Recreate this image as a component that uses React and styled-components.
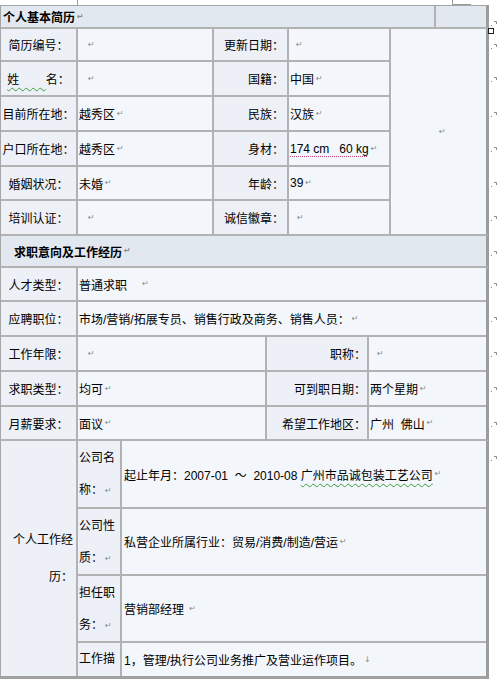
import React from "react";
import styled, { createGlobalStyle } from "styled-components";

const GlobalStyle = createGlobalStyle`
  html, body {
    margin: 0;
    padding: 0;
    background: #ffffff;
  }
  body {
    font-family: "Liberation Sans", "Noto Sans CJK SC", sans-serif;
    font-size: 12px;
    color: #000;
  }
`;

const Page = styled.div`
  width: 497px;
  height: 683px;
  overflow: hidden;
`;

const Stub = styled.div`
  display: flex;
  height: 5px;
`;

const StubBox = styled.div`
  width: ${(p) => p.$w}px;
  margin-left: ${(p) => p.$ml || 0}px;
  border-right: ${(p) => (p.$edge ? "1px solid #9a9a9a" : "0")};
  border-left: ${(p) => (p.$lead ? "1px solid #9a9a9a" : "0")};
  border-bottom: ${(p) => (p.$base ? "1px solid #9a9a9a" : "0")};
`;

const Band = styled.div`
  position: relative;
  display: flex;
  align-items: flex-start;
`;

const Table = styled.div`
  display: grid;
  grid-template-columns: ${(p) => p.$cols};
  grid-template-rows: ${(p) => p.$rows};
  gap: 2px;
  width: 485px;
  background: #b2b2b2;
  border-left: 1px solid #a6a6a6;
  border-right: 3px solid #9c9c9c;
  border-top: ${(p) => (p.$top ? "1px solid #a6a6a6" : "0")};
  border-bottom: ${(p) => (p.$last ? "3px solid #a0a0a0" : "2px solid #b2b2b2")};
`;

const MarkCol = styled.div`
  display: grid;
  grid-template-rows: ${(p) => p.$rows};
  gap: 2px;
  width: 8px;
  padding-top: ${(p) => (p.$top ? 1 : 0)}px;
`;

const MarkSlot = styled.div`
  padding: 9px 0 0 2px;
`;

const Handle = styled.div`
  position: absolute;
  top: -1px;
  left: 488px;
  width: 4px;
  height: 4px;
  border: 1px solid #222;
  background: #fff;
`;

const Cell = styled.div`
  display: flex;
  align-items: center;
  justify-content: ${(p) =>
    p.$align === "right" ? "flex-end" : p.$align === "center" ? "center" : "flex-start"};
  padding: 0 ${(p) => p.$pr ?? 2}px 0 ${(p) => p.$pl ?? 2}px;
  background: ${(p) => (p.$label ? "#edf1f7" : "#f3f6fa")};
  white-space: pre;
  overflow: hidden;
  min-width: 0;
`;

const HeadCell = styled.div`
  display: flex;
  align-items: center;
  padding-left: ${(p) => p.$pl ?? 2}px;
  background: #e2e8f0;
  font-weight: 700;
  white-space: pre;
`;

const PhotoCell = styled(Cell)`
  grid-column: 5;
  grid-row: 1 / span 6;
  padding-left: 46px;
  justify-content: flex-start;
`;

const WrapCell = styled.div`
  grid-row: ${(p) => p.$span || "auto"};
  display: flex;
  flex-direction: column;
  justify-content: ${(p) => (p.$top ? "flex-start" : "center")};
  align-items: ${(p) => (p.$right ? "flex-end" : "flex-start")};
  padding: 0 ${(p) => p.$pr ?? 1}px 0 ${(p) => p.$pl ?? 1}px;
  background: #edf1f7;
  overflow: hidden;
`;

const Line = styled.div`
  line-height: ${(p) => p.$lh}px;
  white-space: nowrap;
`;

const Para = styled.span`
  font-family: "DejaVu Sans", sans-serif;
  font-size: 8px;
  line-height: 1;
  color: #8a8a8a;
  margin-left: 2px;
  vertical-align: 1px;
`;

const Squiggle = styled.span`
  text-decoration: underline wavy #3c9a3c;
  text-decoration-thickness: 1px;
  text-underline-offset: 3px;
`;

const Dotted = styled.span`
  text-decoration: underline dotted #c8407a;
  text-decoration-thickness: 1px;
  text-underline-offset: 3px;
`;

const P = () => <Para>↵</Para>;

const RowMark = () => (
  <svg width="6" height="5" viewBox="0 0 6 5">
    <rect x="0" y="4" width="1" height="1" fill="#8a8a8a" />
    <path d="M3 0.5 H5.5 V3" stroke="#8a8a8a" strokeWidth="1" fill="none" />
  </svg>
);

const Marks = ({ rows, count, top }) => (
  <MarkCol $rows={rows} $top={top}>
    {Array.from({ length: count }).map((_, i) => (
      <MarkSlot key={`mark-${i}`}>
        <RowMark />
      </MarkSlot>
    ))}
  </MarkCol>
);

const SubLabel = ({ first, second, top }) => (
  <WrapCell $top={top}>
    <Line $lh={32}>{first}</Line>
    {second && (
      <Line $lh={32}>
        {second}
        <P />
      </Line>
    )}
  </WrapCell>
);

const infoRows = "31px 33px 33px 33px 32px 33px";
const jobRows = "32px 33px 33px 33px 32px";
const workRows = "66px 65px 65px 33px";

export default function App() {
  return (
    <Page>
      <GlobalStyle />
      <Stub>
        <StubBox $w={77} $edge />
        <StubBox $w={18} $ml={374} $lead $base />
      </Stub>

      <Band>
        <Table $cols="433px 50px" $rows="21px" $top>
          <HeadCell>
            个人基本简历
            <P />
          </HeadCell>
          <HeadCell />
        </Table>
        <Marks rows="21px" count={1} top />
      </Band>

      <Band>
        <Handle />
        <Table $cols="75px 134px 73px 100px 95px" $rows={infoRows}>
          <Cell $label $align="center">简历编号：</Cell>
          <Cell $pl={8}><P /></Cell>
          <Cell $label $align="right" $pr={3}>更新日期：</Cell>
          <Cell $pl={5}><P /></Cell>
          <PhotoCell><P /></PhotoCell>

          <Cell $label $align="center">
            <Squiggle>{"姓        "}</Squiggle>名：
          </Cell>
          <Cell $pl={8}><P /></Cell>
          <Cell $label $align="right" $pr={3}>国籍：</Cell>
          <Cell $pl={1}>中国<P /></Cell>

          <Cell $label $align="center">目前所在地：</Cell>
          <Cell $pl={1}>越秀区<P /></Cell>
          <Cell $label $align="right" $pr={3}>民族：</Cell>
          <Cell $pl={1}>汉族<P /></Cell>

          <Cell $label $align="center">户口所在地：</Cell>
          <Cell $pl={1}>越秀区<P /></Cell>
          <Cell $label $align="right" $pr={3}>身材：</Cell>
          <Cell $pl={1}>
            <Dotted>{"174 cm   60 kg"}</Dotted>
            <P />
          </Cell>

          <Cell $label $align="center">婚姻状况：</Cell>
          <Cell $pl={1}>未婚<P /></Cell>
          <Cell $label $align="right" $pr={3}>年龄：</Cell>
          <Cell $pl={1}>39<P /></Cell>

          <Cell $label $align="center">培训认证：</Cell>
          <Cell $pl={8}><P /></Cell>
          <Cell $label $align="right" $pr={3}>诚信徽章：</Cell>
          <Cell $pl={6}><P /></Cell>
        </Table>
        <Marks rows={infoRows} count={6} />
      </Band>

      <Band>
        <Table $cols="485px" $rows="30px">
          <HeadCell $pl={13}>
            求职意向及工作经历
            <P />
          </HeadCell>
        </Table>
        <Marks rows="30px" count={1} />
      </Band>

      <Band>
        <Table $cols="75px 187px 100px 117px" $rows={jobRows}>
          <Cell $label $align="center">人才类型：</Cell>
          <Cell $pl={1} style={{ gridColumn: "2 / span 3" }}>
            {"普通求职    "}
            <P />
          </Cell>

          <Cell $label $align="center">应聘职位：</Cell>
          <Cell $pl={1} style={{ gridColumn: "2 / span 3" }}>
            市场/营销/拓展专员、销售行政及商务、销售人员：
            <P />
          </Cell>

          <Cell $label $align="center">工作年限：</Cell>
          <Cell $pl={8}><P /></Cell>
          <Cell $label $align="right" $pr={1}>职称：</Cell>
          <Cell $pl={6}><P /></Cell>

          <Cell $label $align="center">求职类型：</Cell>
          <Cell $pl={1}>均可<P /></Cell>
          <Cell $label $align="right" $pr={1}>可到职日期：</Cell>
          <Cell $pl={1}>两个星期<P /></Cell>

          <Cell $label $align="center">月薪要求：</Cell>
          <Cell $pl={1}>面议<P /></Cell>
          <Cell $label $align="right" $pr={1}>希望工作地区：</Cell>
          <Cell $pl={1}>{"广州  佛山"}<P /></Cell>
        </Table>
        <Marks rows={jobRows} count={5} />
      </Band>

      <Band>
        <Table $cols="75px 42px 364px" $rows={workRows} $last>
          <WrapCell $span="1 / span 4" $right $pr={3}>
            <Line $lh={37}>个人工作经</Line>
            <Line $lh={37}>历：</Line>
          </WrapCell>

          <SubLabel first="公司名" second="称：" />
          <Cell $pl={2}>
            {"起止年月：2007-01  ～  2010-08 "}
            <Squiggle>广州市品诚包装工艺公司</Squiggle>
            <P />
          </Cell>

          <SubLabel first="公司性" second="质：" />
          <Cell $pl={2}>
            私营企业所属行业：贸易/消费/制造/营运
            <P />
          </Cell>

          <SubLabel first="担任职" second="务：" />
          <Cell $pl={2}>
            {"营销部经理 "}
            <P />
          </Cell>

          <SubLabel first="工作描" top />
          <Cell $pl={2}>
            1，管理/执行公司业务推广及营业运作项目。
            <Para>↓</Para>
          </Cell>
        </Table>
        <Marks rows={workRows} count={1} />
      </Band>
    </Page>
  );
}
